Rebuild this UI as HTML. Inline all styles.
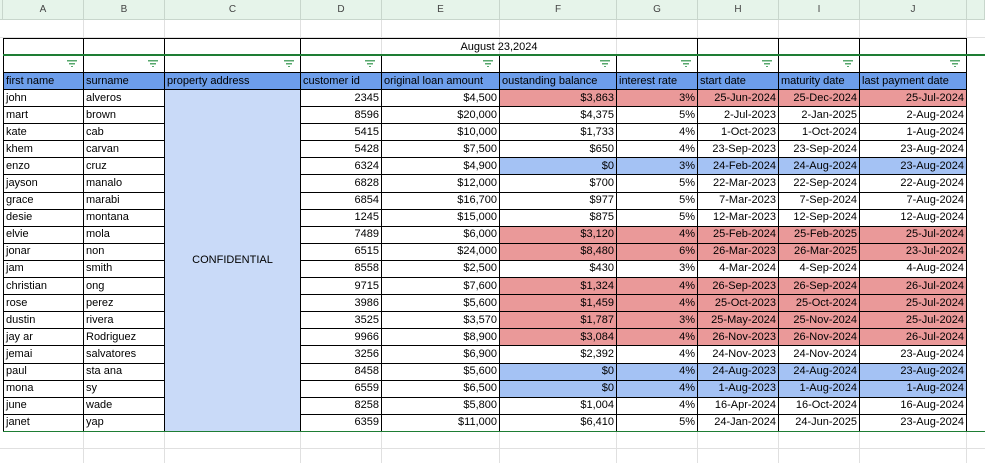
<!DOCTYPE html>
<html><head><meta charset="utf-8"><style>
body{margin:0;width:985px;height:463px;overflow:hidden;background:#fff;font-family:"Liberation Sans",Arial,sans-serif;font-size:11px;color:#000;position:relative}
.hdr{position:absolute;top:0;height:20px;background:#e6f4ea;border-right:1px solid #c8d6cc;border-bottom:1px solid #c8d6cc;box-sizing:border-box;text-align:center;line-height:20px;font-size:10px;color:#444}
.vl{position:absolute;width:1px;background:#e0e0e0}
.hl{position:absolute;height:1px;background:#e0e0e0;left:0;width:985px}
table{position:absolute;left:3px;top:38px;border-collapse:collapse;table-layout:fixed}
td{border:1px solid #000;padding:0 2px;height:16px;white-space:nowrap;overflow:hidden;line-height:15px}
tr.d td{height:16.1px}
.r{text-align:right}
.h td{background:#6d9eeb}
.R{background:#ea9999}
.B{background:#a4c2f4}
.c{background:#c9daf8;text-align:center}
.f td{position:relative}
.f td::after{content:"";position:absolute;right:6px;top:4px;width:10px;height:7px;background:linear-gradient(#57a86d,#57a86d) 0 0/10px 1.5px no-repeat,linear-gradient(#57a86d,#57a86d) 2px 3px/6px 1.5px no-repeat,linear-gradient(#57a86d,#57a86d) 4px 6px/2px 1.5px no-repeat}
.g{position:absolute;left:3px;width:982px;height:2px;background:#1e7d34}
</style></head><body>
<div class="hdr" style="left:0;width:3px"></div>
<div class="hdr" style="left:3px;width:81px">A</div>
<div class="hdr" style="left:84px;width:81px">B</div>
<div class="hdr" style="left:165px;width:136px">C</div>
<div class="hdr" style="left:301px;width:81px">D</div>
<div class="hdr" style="left:382px;width:118px">E</div>
<div class="hdr" style="left:500px;width:117px">F</div>
<div class="hdr" style="left:617px;width:81px">G</div>
<div class="hdr" style="left:698px;width:81px">H</div>
<div class="hdr" style="left:779px;width:81px">I</div>
<div class="hdr" style="left:860px;width:107px">J</div>
<div class="hdr" style="left:967px;width:18px"></div>
<div class="vl" style="left:83px;top:20px;height:443px"></div>
<div class="vl" style="left:164px;top:20px;height:443px"></div>
<div class="vl" style="left:300px;top:20px;height:443px"></div>
<div class="vl" style="left:381px;top:20px;height:443px"></div>
<div class="vl" style="left:499px;top:20px;height:443px"></div>
<div class="vl" style="left:616px;top:20px;height:443px"></div>
<div class="vl" style="left:697px;top:20px;height:443px"></div>
<div class="vl" style="left:778px;top:20px;height:443px"></div>
<div class="vl" style="left:859px;top:20px;height:443px"></div>
<div class="vl" style="left:966px;top:20px;height:443px"></div>
<div class="hl" style="top:37px"></div>
<div class="hl" style="top:448px"></div>
<table>
<colgroup><col style="width:80px"><col style="width:81px"><col style="width:136px"><col style="width:81px"><col style="width:118px"><col style="width:117px"><col style="width:81px"><col style="width:81px"><col style="width:81px"><col style="width:107px"></colgroup>
<tr><td></td><td></td><td></td><td colspan="4" style="text-align:center">August 23,2024</td><td></td><td></td><td></td></tr>
<tr class="f"><td></td><td></td><td></td><td></td><td></td><td></td><td></td><td></td><td></td><td></td></tr>
<tr class="h"><td>first name</td><td>surname</td><td>property address</td><td>customer id</td><td>original loan amount</td><td>oustanding balance</td><td>interest rate</td><td>start date</td><td>maturity date</td><td>last payment date</td></tr>
<tr class="d"><td>john</td><td>alveros</td><td class="c" rowspan="20">CONFIDENTIAL</td><td class="r">2345</td><td class="r">$4,500</td><td class="r R">$3,863</td><td class="r R">3%</td><td class="r R">25-Jun-2024</td><td class="r R">25-Dec-2024</td><td class="r R">25-Jul-2024</td></tr>
<tr class="d"><td>mart</td><td>brown</td><td class="r">8596</td><td class="r">$20,000</td><td class="r">$4,375</td><td class="r">5%</td><td class="r">2-Jul-2023</td><td class="r">2-Jan-2025</td><td class="r">2-Aug-2024</td></tr>
<tr class="d"><td>kate</td><td>cab</td><td class="r">5415</td><td class="r">$10,000</td><td class="r">$1,733</td><td class="r">4%</td><td class="r">1-Oct-2023</td><td class="r">1-Oct-2024</td><td class="r">1-Aug-2024</td></tr>
<tr class="d"><td>khem</td><td>carvan</td><td class="r">5428</td><td class="r">$7,500</td><td class="r">$650</td><td class="r">4%</td><td class="r">23-Sep-2023</td><td class="r">23-Sep-2024</td><td class="r">23-Aug-2024</td></tr>
<tr class="d"><td>enzo</td><td>cruz</td><td class="r">6324</td><td class="r">$4,900</td><td class="r B">$0</td><td class="r B">3%</td><td class="r B">24-Feb-2024</td><td class="r B">24-Aug-2024</td><td class="r B">23-Aug-2024</td></tr>
<tr class="d"><td>jayson</td><td>manalo</td><td class="r">6828</td><td class="r">$12,000</td><td class="r">$700</td><td class="r">5%</td><td class="r">22-Mar-2023</td><td class="r">22-Sep-2024</td><td class="r">22-Aug-2024</td></tr>
<tr class="d"><td>grace</td><td>marabi</td><td class="r">6854</td><td class="r">$16,700</td><td class="r">$977</td><td class="r">5%</td><td class="r">7-Mar-2023</td><td class="r">7-Sep-2024</td><td class="r">7-Aug-2024</td></tr>
<tr class="d"><td>desie</td><td>montana</td><td class="r">1245</td><td class="r">$15,000</td><td class="r">$875</td><td class="r">5%</td><td class="r">12-Mar-2023</td><td class="r">12-Sep-2024</td><td class="r">12-Aug-2024</td></tr>
<tr class="d"><td>elvie</td><td>mola</td><td class="r">7489</td><td class="r">$6,000</td><td class="r R">$3,120</td><td class="r R">4%</td><td class="r R">25-Feb-2024</td><td class="r R">25-Feb-2025</td><td class="r R">25-Jul-2024</td></tr>
<tr class="d"><td>jonar</td><td>non</td><td class="r">6515</td><td class="r">$24,000</td><td class="r R">$8,480</td><td class="r R">6%</td><td class="r R">26-Mar-2023</td><td class="r R">26-Mar-2025</td><td class="r R">23-Jul-2024</td></tr>
<tr class="d"><td>jam</td><td>smith</td><td class="r">8558</td><td class="r">$2,500</td><td class="r">$430</td><td class="r">3%</td><td class="r">4-Mar-2024</td><td class="r">4-Sep-2024</td><td class="r">4-Aug-2024</td></tr>
<tr class="d"><td>christian</td><td>ong</td><td class="r">9715</td><td class="r">$7,600</td><td class="r R">$1,324</td><td class="r R">4%</td><td class="r R">26-Sep-2023</td><td class="r R">26-Sep-2024</td><td class="r R">26-Jul-2024</td></tr>
<tr class="d"><td>rose</td><td>perez</td><td class="r">3986</td><td class="r">$5,600</td><td class="r R">$1,459</td><td class="r R">4%</td><td class="r R">25-Oct-2023</td><td class="r R">25-Oct-2024</td><td class="r R">25-Jul-2024</td></tr>
<tr class="d"><td>dustin</td><td>rivera</td><td class="r">3525</td><td class="r">$3,570</td><td class="r R">$1,787</td><td class="r R">3%</td><td class="r R">25-May-2024</td><td class="r R">25-Nov-2024</td><td class="r R">25-Jul-2024</td></tr>
<tr class="d"><td>jay ar</td><td>Rodriguez</td><td class="r">9966</td><td class="r">$8,900</td><td class="r R">$3,084</td><td class="r R">4%</td><td class="r R">26-Nov-2023</td><td class="r R">26-Nov-2024</td><td class="r R">26-Jul-2024</td></tr>
<tr class="d"><td>jemai</td><td>salvatores</td><td class="r">3256</td><td class="r">$6,900</td><td class="r">$2,392</td><td class="r">4%</td><td class="r">24-Nov-2023</td><td class="r">24-Nov-2024</td><td class="r">23-Aug-2024</td></tr>
<tr class="d"><td>paul</td><td>sta ana</td><td class="r">8458</td><td class="r">$5,600</td><td class="r B">$0</td><td class="r B">4%</td><td class="r B">24-Aug-2023</td><td class="r B">24-Aug-2024</td><td class="r B">23-Aug-2024</td></tr>
<tr class="d"><td>mona</td><td>sy</td><td class="r">6559</td><td class="r">$6,500</td><td class="r B">$0</td><td class="r B">4%</td><td class="r B">1-Aug-2023</td><td class="r B">1-Aug-2024</td><td class="r B">1-Aug-2024</td></tr>
<tr class="d"><td>june</td><td>wade</td><td class="r">8258</td><td class="r">$5,800</td><td class="r">$1,004</td><td class="r">4%</td><td class="r">16-Apr-2024</td><td class="r">16-Oct-2024</td><td class="r">16-Aug-2024</td></tr>
<tr class="d"><td>janet</td><td>yap</td><td class="r">6359</td><td class="r">$11,000</td><td class="r">$6,410</td><td class="r">5%</td><td class="r">24-Jan-2024</td><td class="r">24-Jun-2025</td><td class="r">23-Aug-2024</td></tr>
</table>
<div class="g" style="top:54px"></div>
<div class="g" style="top:431px;height:1px"></div>
</body></html>
